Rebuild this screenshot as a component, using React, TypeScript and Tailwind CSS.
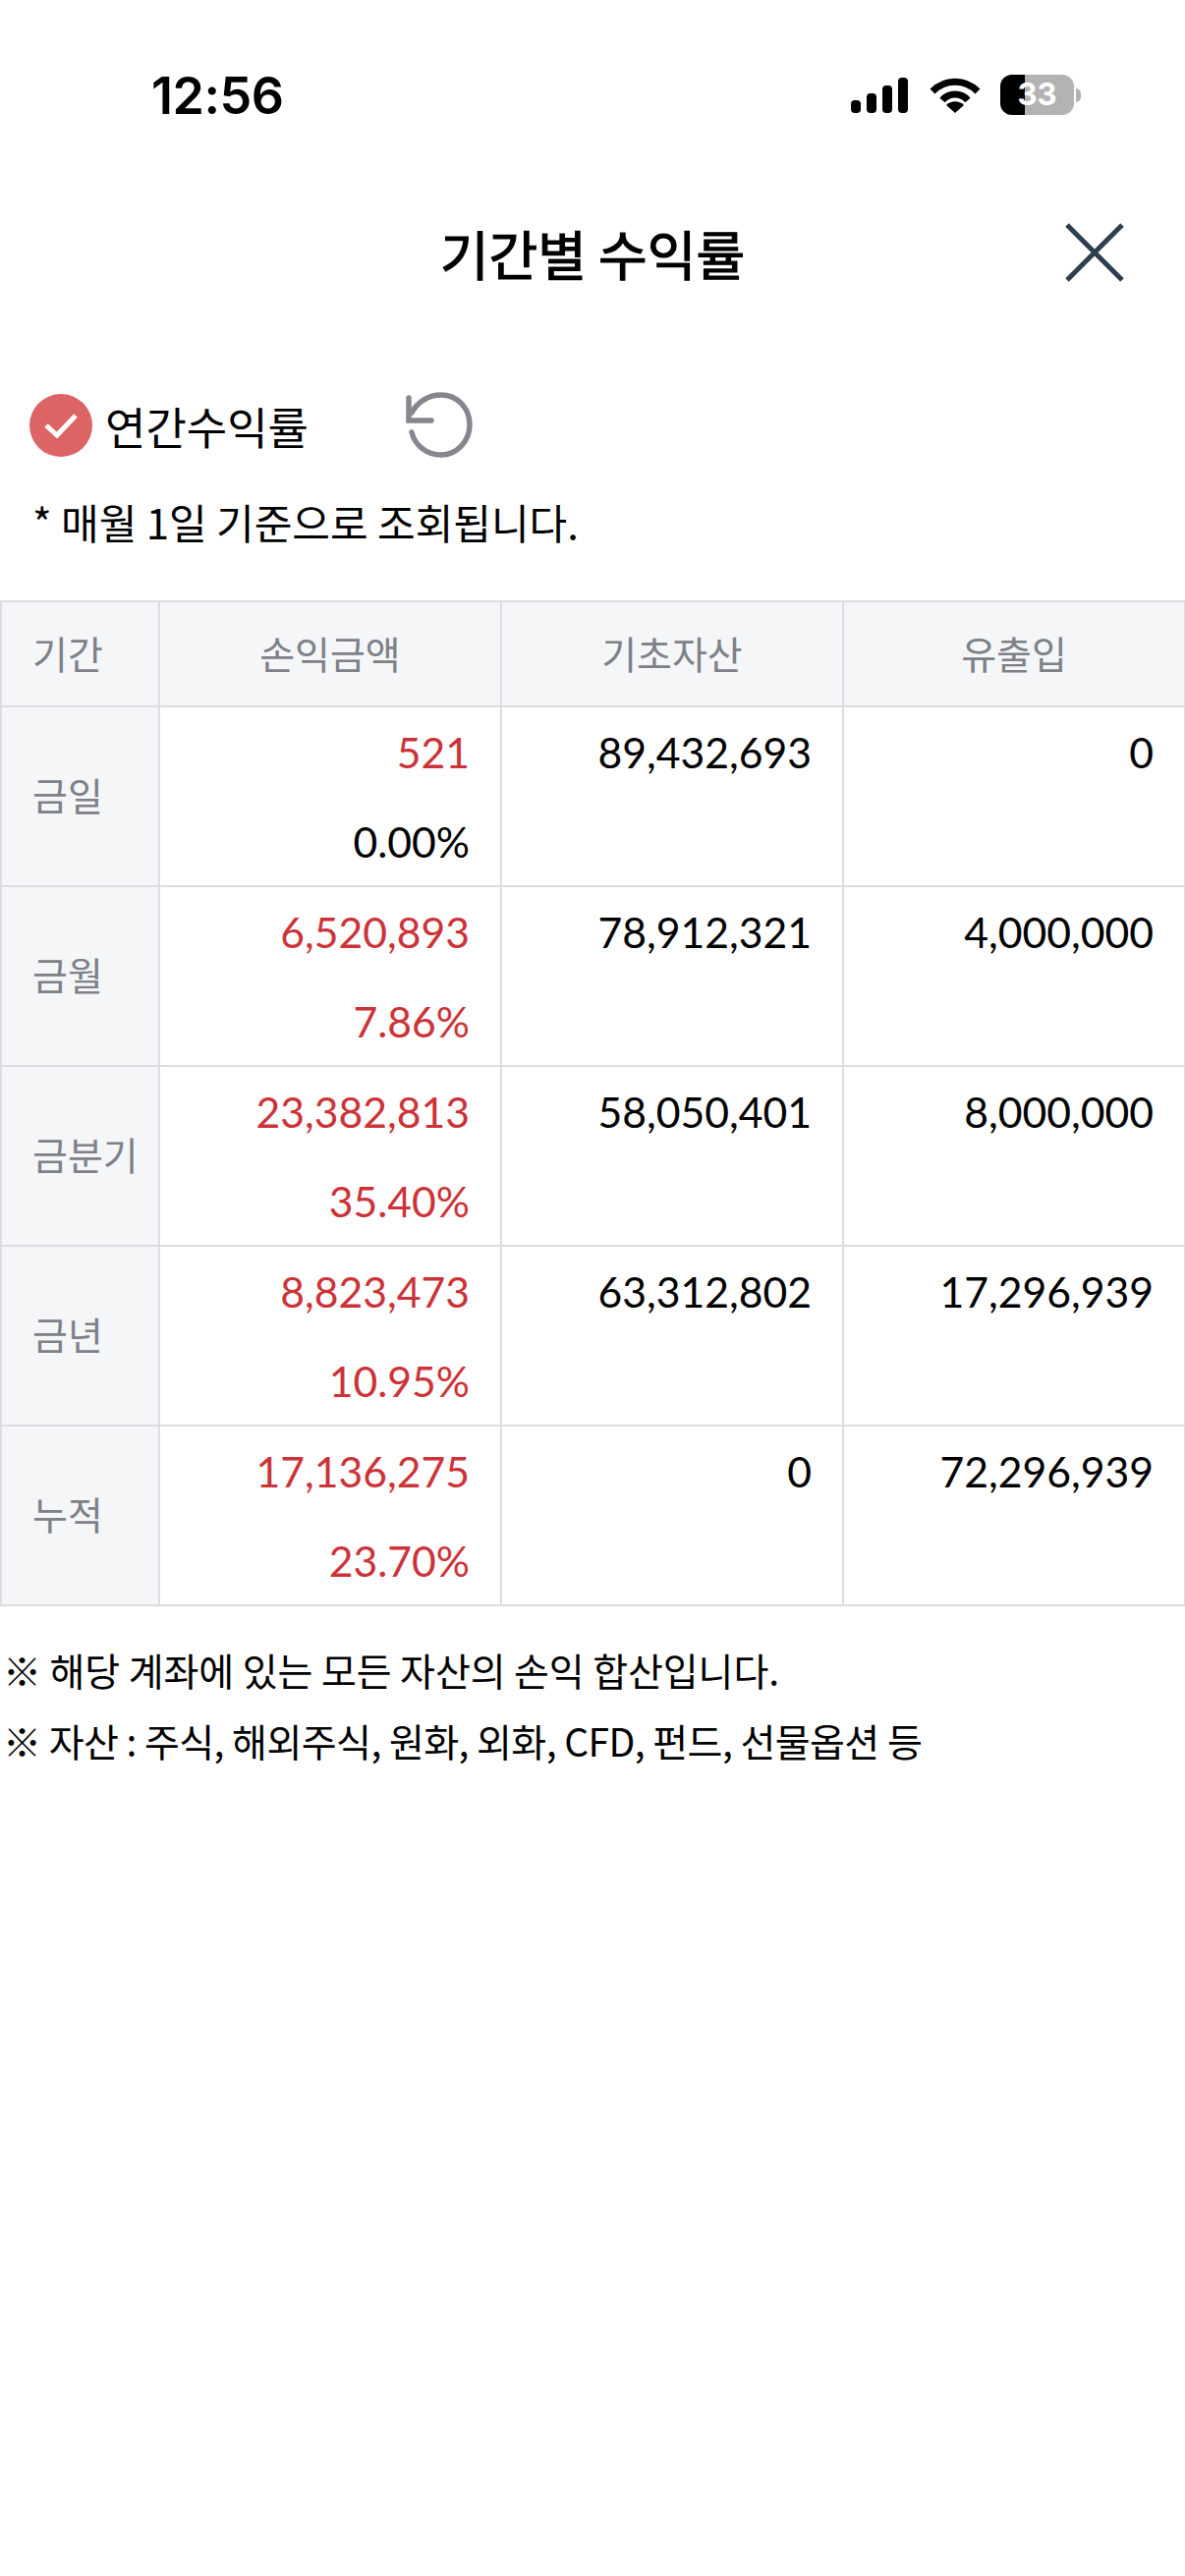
const rows = [
  { label: "금일", amount: "521", rate: "0.00%", rateRed: false, base: "89,432,693", flow: "0" },
  { label: "금월", amount: "6,520,893", rate: "7.86%", rateRed: true, base: "78,912,321", flow: "4,000,000" },
  { label: "금분기", amount: "23,382,813", rate: "35.40%", rateRed: true, base: "58,050,401", flow: "8,000,000" },
  { label: "금년", amount: "8,823,473", rate: "10.95%", rateRed: true, base: "63,312,802", flow: "17,296,939" },
  { label: "누적", amount: "17,136,275", rate: "23.70%", rateRed: true, base: "0", flow: "72,296,939" },
]

function StatusBar() {
  return (
    <div className="flex h-[196px] items-start justify-between pt-[68px] pl-[154px] pr-[106px]">
      <span className="font-['Inter','Liberation_Sans',sans-serif] text-[52px] leading-[60px] font-semibold tracking-[-0.5px] text-black">12:56</span>
      <div className="mt-[8px] flex items-center gap-[20px]">
        <svg width="60" height="38" viewBox="0 0 60 38" fill="#000">
          <rect x="0" y="24" width="10" height="13" rx="4" />
          <rect x="16" y="17" width="10" height="20" rx="4" />
          <rect x="32" y="9" width="10" height="28" rx="4" />
          <rect x="48" y="1" width="10" height="36" rx="4" />
        </svg>
        <svg width="52" height="38" viewBox="0 0 52 38" fill="none" stroke="#000">
          <path d="M3 15C16 2 36 2 49 15" strokeWidth="7" />
          <path d="M13 24C20 16 32 16 39 24" strokeWidth="7" />
          <path d="M17 29L26 37L35 29C30 24 22 24 17 29Z" fill="#000" stroke="none" />
        </svg>
        <div className="relative flex items-center">
          <div className="relative h-[41px] w-[75px] overflow-hidden rounded-[12px] bg-[#b3b3b3]">
            <div className="h-full w-[25px] bg-black" />
            <span className="absolute inset-0 flex items-center justify-center font-['Inter','Liberation_Sans',sans-serif] text-[31px] font-bold text-white">33</span>
          </div>
          <div className="ml-[2px] h-[14px] w-[5px] rounded-r-full bg-[#b3b3b3]" />
        </div>
      </div>
    </div>
  )
}

export default function App() {
  return (
    <div className="min-h-[2622px] bg-white font-['Lato','Noto_Sans_CJK_KR',sans-serif] text-black">
      <StatusBar />

      <div className="relative flex h-[124px] items-center justify-center">
        <h1 className="font-['Noto_Sans_CJK_KR',sans-serif] text-[54px] leading-none font-normal [-webkit-text-stroke:1.2px_#000]">기간별 수익률</h1>
        <svg className="absolute top-[31px] right-[62px]" width="60" height="60" viewBox="0 0 60 60" stroke="#2f3e4e" strokeWidth="5">
          <path d="M2 2L58 58M58 2L2 58" />
        </svg>
      </div>

      <div className="mt-[80px] flex h-[66px] items-center pl-[30px]">
        <div className="flex h-[64px] w-[64px] items-center justify-center rounded-full bg-[#dc6464]">
          <svg width="36" height="30" viewBox="0 0 36 30" fill="none" stroke="#fff" strokeWidth="5">
            <path d="M3 15L14 25L33 5" />
          </svg>
        </div>
        <span className="ml-[13px] font-['Noto_Sans_CJK_KR',sans-serif] text-[45px] leading-none">연간수익률</span>
        <svg className="ml-[97px]" width="72" height="72" viewBox="0 0 72 72" fill="none" stroke="#85878d" strokeWidth="5.5" strokeLinecap="round">
          <path d="M5 8V31H28" />
          <path d="M8 23C14 12 25 5 38 5C54 5 67 18 67 35C67 52 54 66 38 66C23 66 11 56 8 43" />
        </svg>
      </div>

      <p className="mt-[37px] pl-[33px] font-['Noto_Sans_CJK_KR',sans-serif] text-[42px] leading-[56px]">* 매월 1일 기준으로 조회됩니다.</p>

      <table className="mt-[52px] w-[1205px] table-fixed border-collapse border-2 border-[#dcdde0]">
        <colgroup>
          <col className="w-[161px]" />
          <col className="w-[348px]" />
          <col className="w-[348px]" />
          <col className="w-[348px]" />
        </colgroup>
        <thead>
          <tr className="h-[107px] bg-[#f5f6f8] font-['Noto_Sans_CJK_KR',sans-serif] text-[39px] text-[#7e8188]">
            <th className="border-2 border-[#dcdde0] pb-[3px] pl-[31px] text-left font-normal">기간</th>
            <th className="border-2 border-[#dcdde0] pb-[3px] font-normal">손익금액</th>
            <th className="border-2 border-[#dcdde0] pb-[3px] font-normal">기초자산</th>
            <th className="border-2 border-[#dcdde0] pb-[3px] font-normal">유출입</th>
          </tr>
        </thead>
        <tbody>
          {rows.map((row) => (
            <tr key={row.label} className="h-[183px] text-[42.7px] leading-[91px]">
              <td className="border-2 border-[#dcdde0] bg-[#f5f6f8] pb-[5px] pl-[31px] text-left font-['Noto_Sans_CJK_KR',sans-serif] text-[39px] text-[#7e8188]">{row.label}</td>
              <td className="border-2 border-[#dcdde0] pr-[31px] text-right align-top">
                <div className="-mb-[1px]">
                  <div className="text-[#cc3338]">{row.amount}</div>
                  <div className={row.rateRed ? "text-[#cc3338]" : "text-black"}>{row.rate}</div>
                </div>
              </td>
              <td className="border-2 border-[#dcdde0] pr-[31px] text-right align-top">{row.base}</td>
              <td className="border-2 border-[#dcdde0] pr-[31px] text-right align-top">{row.flow}</td>
            </tr>
          ))}
        </tbody>
      </table>

      <div className="mt-[37px] pl-[3px] font-['Noto_Sans_CJK_KR',sans-serif] text-[39px] leading-[54px]">
        <p className="tracking-[-0.1px]">※ 해당 계좌에 있는 모든 자산의 손익 합산입니다.</p>
        <p className="mt-[18px] tracking-[-0.55px]">※ 자산 : 주식, 해외주식, 원화, 외화, CFD, 펀드, 선물옵션 등</p>
      </div>
    </div>
  )
}
